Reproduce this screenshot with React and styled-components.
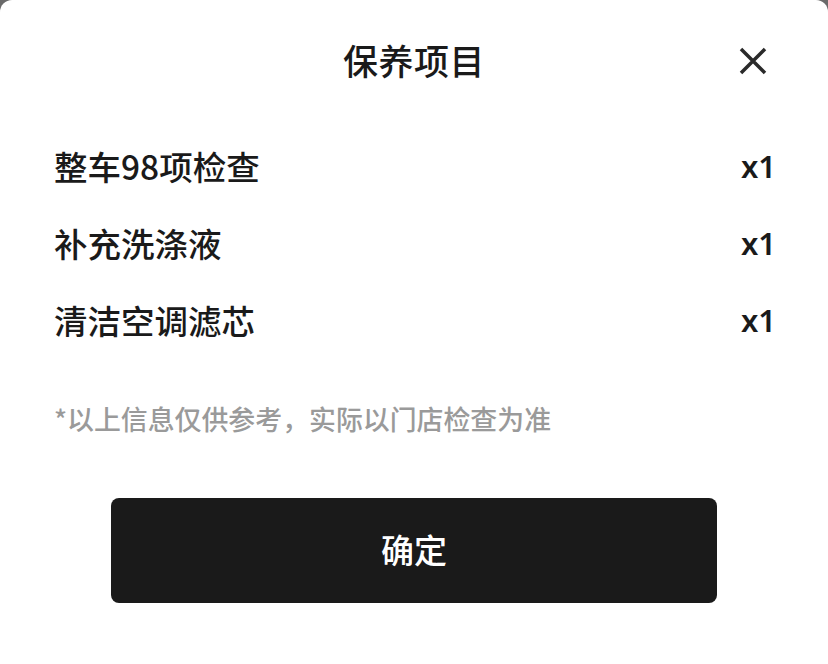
import React from "react";
import styled, { createGlobalStyle } from "styled-components";

const Global = createGlobalStyle`
  html, body {
    margin: 0;
    padding: 0;
    background: #6a6a6a;
  }
  body {
    font-family: "Noto Sans CJK SC", "Noto Sans", sans-serif;
  }
`;

const Sheet = styled.div`
  width: 828px;
  height: 664px;
  background: #ffffff;
  border-radius: 12px 12px 0 0;
  box-sizing: border-box;
  display: flex;
  flex-direction: column;
  padding: 0 54px;
`;

const Header = styled.div`
  height: 124px;
  padding-bottom: 6px;
  box-sizing: border-box;
  display: flex;
  align-items: center;
  justify-content: center;
  position: relative;
`;

const Title = styled.div`
  font-size: 35px;
  font-weight: 500;
  color: #1a1a1a;
  letter-spacing: 0.5px;
`;

const CloseButton = styled.button`
  position: absolute;
  right: 7px;
  top: 47px;
  width: 28px;
  height: 28px;
  padding: 0;
  border: none;
  background: transparent;
  display: flex;
  align-items: center;
  justify-content: center;
`;

const List = styled.div`
  padding-top: 3px;
  display: flex;
  flex-direction: column;
`;

const Row = styled.div`
  height: 77px;
  display: flex;
  align-items: center;
  justify-content: space-between;
  font-size: 33.5px;
  font-weight: 500;
  color: #1a1a1a;
`;

const Qty = styled.span`
  font-family: "Noto Sans", "Noto Sans CJK SC", sans-serif;
  font-weight: 600;
  font-size: 31px;
  margin-right: -2px;
`;

const Note = styled.div`
  margin-top: 43px;
  height: 36px;
  line-height: 36px;
  font-size: 26.9px;
  font-weight: 500;
  color: #9a9a9a;
`;

const Confirm = styled.button`
  margin: 61px auto 0;
  width: 606px;
  height: 105px;
  padding: 0 0 4px;
  border: none;
  border-radius: 8px;
  background: #1a1a1a;
  color: #ffffff;
  font-family: "Noto Sans CJK SC", sans-serif;
  font-size: 33px;
  font-weight: 500;
  display: flex;
  align-items: center;
  justify-content: center;
`;

const items = [
  { name: "整车98项检查", qty: 1 },
  { name: "补充洗涤液", qty: 1 },
  { name: "清洁空调滤芯", qty: 1 },
];

export default function App() {
  return (
    <>
      <Global />
      <Sheet>
        <Header>
          <Title>保养项目</Title>
          <CloseButton aria-label="关闭">
            <svg width="28" height="28" viewBox="0 0 28 28">
              <path
                d="M2 2 L26 26 M26 2 L2 26"
                stroke="#2a2a2a"
                strokeWidth="3.5"
                strokeLinecap="butt"
                fill="none"
              />
            </svg>
          </CloseButton>
        </Header>
        <List>
          {items.map((it) => (
            <Row key={it.name}>
              <span>{it.name}</span>
              <Qty>x{it.qty}</Qty>
            </Row>
          ))}
        </List>
        <Note>*以上信息仅供参考，实际以门店检查为准</Note>
        <Confirm>确定</Confirm>
      </Sheet>
    </>
  );
}
